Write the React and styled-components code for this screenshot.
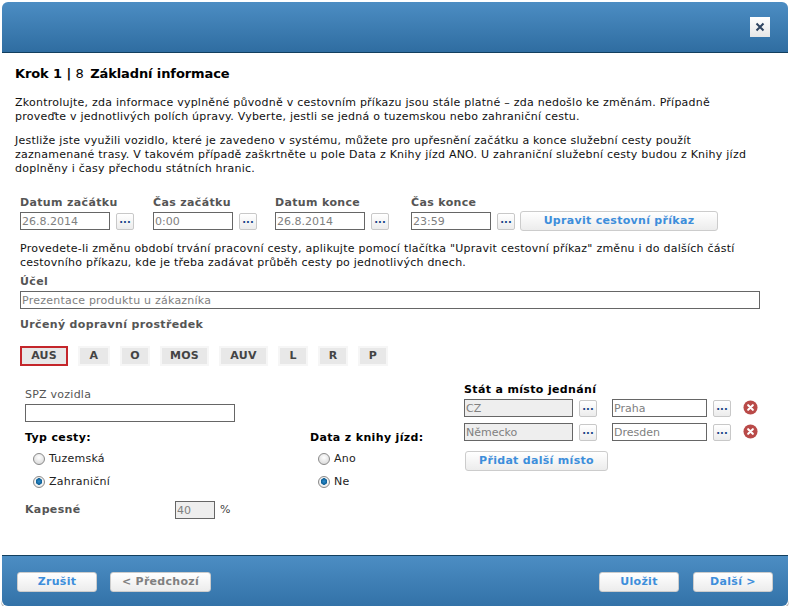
import React from "react";
import styled, { createGlobalStyle } from "styled-components";

const GlobalStyle = createGlobalStyle`
    html, body {
        margin: 0;
        padding: 0;
        background: #fff;
    }
    * {
        box-sizing: border-box;
    }
`;

const Dialog = styled.div`
    width: 786px;
    height: 604px;
    margin: 2px 0 0 2px;
    display: flex;
    flex-direction: column;
    border-radius: 6px;
    overflow: hidden;
    box-shadow: 0 0 0 1px #fff, 0 2px 0 1px #bbb;
    font-family: "DejaVu Sans", Verdana, sans-serif;
    font-size: 11px;
    line-height: 14px;
    letter-spacing: 0.24px;
    color: #111;
`;

const Header = styled.div`
    height: 51px;
    flex: none;
    display: flex;
    align-items: center;
    justify-content: flex-end;
    padding: 0 18px 0 0;
    background: linear-gradient(#4c8dc3, #2f6da1);
    border-bottom: 1px solid #123f5e;
`;

const CloseButton = styled.button`
    width: 20px;
    height: 20px;
    padding: 0;
    border: none;
    display: flex;
    align-items: center;
    justify-content: center;
    background: linear-gradient(#fff, #e6e6e6);
    color: #2f4460;
`;

const Body = styled.div`
    flex: 1;
    background: #fff;
    padding: 13px 0 0 13px;
`;

const Title = styled.h2`
    margin: 0 0 14px;
    font-size: 13px;
    line-height: 16px;
    font-weight: bold;
    letter-spacing: -0.1px;
    color: #000;
`;

const TitleStep = styled.span`
    font-weight: normal;
    margin: 0 2px 0 0;
`;

const Para = styled.p`
    margin: 0 0 10px;
    width: 738px;
`;

const DateRow = styled.div`
    display: flex;
    align-items: flex-end;
    margin: 20px 0 0 5px;
`;

const DateField = styled.div`
    display: flex;
    flex-direction: column;
    width: ${(p) => p.$w}px;
`;

const Label = styled.label`
    display: block;
    margin-bottom: 2px;
    font-size: 11px;
    line-height: 14px;
    font-weight: bold;
    letter-spacing: 0.35px;
    color: #555;
`;

const InputRow = styled.div`
    display: flex;
    align-items: center;
    gap: 6px;
`;

const Input = styled.input`
    display: block;
    width: ${(p) => p.$w}px;
    height: 18px;
    padding: 0 1px;
    border: 1px solid #666;
    border-radius: 0;
    background: ${(p) => (p.$gray ? "#eee" : "#fff")};
    color: #808080;
    font: 11px "DejaVu Sans", Verdana, sans-serif;
    letter-spacing: ${(p) => (p.$spaced ? "0.23px" : "0")};
    outline: none;
`;

const PlaceInput = styled(Input)`
    margin-left: 9px;
`;

const DotsButton = styled.button`
    width: 18px;
    height: 17px;
    flex: none;
    padding: 0 0 3px;
    border: 1px solid #c8c8c8;
    border-radius: 2px;
    background: linear-gradient(#fff, #ececec);
    color: #1c4587;
    font: bold 10px/10px "DejaVu Sans", Verdana, sans-serif;
`;

const ActionButton = styled.button`
    width: ${(p) => p.$w}px;
    height: 20px;
    flex: none;
    padding: 0;
    border: 1px solid #ccc;
    border-radius: 3px;
    background: linear-gradient(#fff, #ececec);
    color: ${(p) => (p.$disabled ? "#808080" : "#3d8edb")};
    font: bold 11px/16px "DejaVu Sans", Verdana, sans-serif;
    letter-spacing: 0.3px;
`;

const EditButton = styled(ActionButton)`
    margin: 0 0 -1px 5px;
`;

const Note = styled.p`
    margin: 12px 0 0 5px;
    width: 745px;
`;

const FieldBlock = styled.div`
    margin: ${(p) => p.$top}px 0 0 5px;
`;

const Chips = styled.div`
    display: flex;
    gap: 10px;
    margin: 14px 0 0 5px;
`;

const Chip = styled.div`
    width: ${(p) => p.$w}px;
    height: 20px;
    display: flex;
    align-items: center;
    justify-content: center;
    border: 2px solid ${(p) => (p.$active ? "#c4262b" : "#f6f6f6")};
    background: #e8e8e8;
    color: #444;
    font-size: 11px;
    font-weight: bold;
`;

const Columns = styled.div`
    display: grid;
    grid-template-columns: 285px 154px 1fr;
    margin: 15px 0 0 10px;
`;

const SmallLabel = styled.div`
    line-height: 14px;
    color: #555;
    margin: 7px 0 2px;
`;

const GroupTitle = styled.div`
    line-height: 14px;
    font-weight: bold;
    letter-spacing: 0.35px;
    color: #000;
    margin: ${(p) => p.$top}px 0 0;
`;

const RadioRow = styled.label`
    display: flex;
    align-items: center;
    gap: 4px;
    height: 14px;
    margin: ${(p) => (p.$first ? "7px" : "9px")} 0 0 8px;
    color: #222;
`;

const RadioDot = styled.span`
    width: 12px;
    height: 12px;
    flex: none;
    border-radius: 50%;
    border: 1px solid #8a8a8a;
    background: ${(p) =>
        p.$checked
            ? "radial-gradient(circle at 50% 45%, #2f8fd0 0, #0d5e94 3px, #f4f4f4 3.5px, #e0e0e0 100%)"
            : "radial-gradient(circle at 50% 35%, #fff, #d2d2d2)"};
`;

const KapesneRow = styled.div`
    display: flex;
    align-items: center;
    margin: 12px 0 0;
`;

const KapesneLabel = styled.span`
    width: 150px;
    font-weight: bold;
    letter-spacing: 0.35px;
    color: #555;
`;

const Percent = styled.span`
    margin-left: 5px;
    color: #444;
`;

const PlaceHead = styled.div`
    margin: 2px 0 2px;
    line-height: 14px;
    font-weight: bold;
    letter-spacing: 0.35px;
    color: #000;
`;

const PlaceRow = styled.div`
    display: flex;
    align-items: center;
    gap: 6px;
    margin-bottom: 6px;
`;

const RemoveIcon = styled.svg`
    width: 15px;
    height: 15px;
    flex: none;
    margin: -2px 0 0 6px;
`;

const AddButton = styled(ActionButton)`
    margin: 4px 0 0 1px;
`;

const Footer = styled.div`
    height: 51px;
    flex: none;
    display: flex;
    align-items: flex-start;
    padding: 16px 15px 0;
    background: linear-gradient(#4c8dc3, #3372a8);
    border-top: 1px solid #123f5e;
`;

const FooterGroup = styled.div`
    display: flex;
    gap: ${(p) => p.$gap}px;
    margin-left: ${(p) => (p.$right ? "auto" : "0")};
`;

const Remove = () => (
    <RemoveIcon viewBox="0 0 16 16">
        <circle cx="8" cy="8" r="7.5" fill="#b94a48" />
        <path d="M5.5 5.5l5 5M10.5 5.5l-5 5" stroke="#fff" strokeWidth="2.2" strokeLinecap="round" />
    </RemoveIcon>
);

const Radio = ({ checked, first, children }) => (
    <RadioRow $first={first}>
        <RadioDot $checked={checked} />
        {children}
    </RadioRow>
);

const chips = [
    ["AUS", 48, true],
    ["A", 32],
    ["O", 30],
    ["MOS", 49],
    ["AUV", 49],
    ["L", 30],
    ["R", 30],
    ["P", 30],
];

const App = () => {
    return (
        <>
            <GlobalStyle />
            <Dialog>
                <Header>
                    <CloseButton aria-label="Zavřít">
                        <svg width="10" height="10" viewBox="0 0 10 10">
                            <path d="M1.5 1.5l7 7M8.5 1.5l-7 7" stroke="currentColor" strokeWidth="2" />
                        </svg>
                    </CloseButton>
                </Header>
                <Body>
                    <Title>Krok 1 | <TitleStep>8</TitleStep> Základní informace</Title>
                    <Para>
                        Zkontrolujte, zda informace vyplněné původně v cestovním příkazu jsou stále platné – zda nedošlo ke změnám. Případně proveďte v jednotlivých polích úpravy. Vyberte, jestli se jedná o tuzemskou nebo zahraniční cestu.
                    </Para>
                    <Para>
                        Jestliže jste využili vozidlo, které je zavedeno v systému, můžete pro upřesnění začátku a konce služební cesty použít zaznamenané trasy. V takovém případě zaškrtněte u pole Data z Knihy jízd ANO. U zahraniční služební cesty budou z Knihy jízd doplněny i časy přechodu státních hranic.
                    </Para>
                    <DateRow>
                        <DateField $w={133}>
                            <Label>Datum začátku</Label>
                            <InputRow>
                                <Input $w={90} defaultValue="26.8.2014" readOnly />
                                <DotsButton>...</DotsButton>
                            </InputRow>
                        </DateField>
                        <DateField $w={122}>
                            <Label>Čas začátku</Label>
                            <InputRow>
                                <Input $w={80} defaultValue="0:00" readOnly />
                                <DotsButton>...</DotsButton>
                            </InputRow>
                        </DateField>
                        <DateField $w={136}>
                            <Label>Datum konce</Label>
                            <InputRow>
                                <Input $w={90} defaultValue="26.8.2014" readOnly />
                                <DotsButton>...</DotsButton>
                            </InputRow>
                        </DateField>
                        <DateField $w={104}>
                            <Label>Čas konce</Label>
                            <InputRow>
                                <Input $w={80} defaultValue="23:59" readOnly />
                                <DotsButton>...</DotsButton>
                            </InputRow>
                        </DateField>
                        <EditButton $w={198}>Upravit cestovní příkaz</EditButton>
                    </DateRow>
                    <Note>
                        Provedete-li změnu období trvání pracovní cesty, aplikujte pomocí tlačítka "Upravit cestovní příkaz" změnu i do dalších částí cestovního příkazu, kde je třeba zadávat průběh cesty po jednotlivých dnech.
                    </Note>
                    <FieldBlock $top={5}>
                        <Label>Účel</Label>
                        <Input $w={740} $spaced defaultValue="Prezentace produktu u zákazníka" readOnly />
                    </FieldBlock>
                    <FieldBlock $top={9}>
                        <Label>Určený dopravní prostředek</Label>
                    </FieldBlock>
                    <Chips>
                        {chips.map(([name, w, active]) => (
                            <Chip key={name} $w={w} $active={active}>{name}</Chip>
                        ))}
                    </Chips>
                    <Columns>
                        <div>
                            <SmallLabel>SPZ vozidla</SmallLabel>
                            <Input $w={210} />
                            <GroupTitle $top={9}>Typ cesty:</GroupTitle>
                            <Radio first>Tuzemská</Radio>
                            <Radio checked>Zahraniční</Radio>
                            <KapesneRow>
                                <KapesneLabel>Kapesné</KapesneLabel>
                                <Input $w={40} $gray defaultValue="40" readOnly />
                                <Percent>%</Percent>
                            </KapesneRow>
                        </div>
                        <div>
                            <GroupTitle $top={50}>Data z knihy jízd:</GroupTitle>
                            <Radio first>Ano</Radio>
                            <Radio checked>Ne</Radio>
                        </div>
                        <div>
                            <PlaceHead>Stát a místo jednání</PlaceHead>
                            <PlaceRow>
                                <Input $w={109} $gray defaultValue="CZ" readOnly />
                                <DotsButton>...</DotsButton>
                                <PlaceInput $w={95} defaultValue="Praha" readOnly />
                                <DotsButton>...</DotsButton>
                                <Remove />
                            </PlaceRow>
                            <PlaceRow>
                                <Input $w={109} $gray defaultValue="Německo" readOnly />
                                <DotsButton>...</DotsButton>
                                <PlaceInput $w={95} defaultValue="Dresden" readOnly />
                                <DotsButton>...</DotsButton>
                                <Remove />
                            </PlaceRow>
                            <AddButton $w={143}>Přidat další místo</AddButton>
                        </div>
                    </Columns>
                </Body>
                <Footer>
                    <FooterGroup $gap={13}>
                        <ActionButton $w={80}>Zrušit</ActionButton>
                        <ActionButton $w={101} $disabled>&lt; Předchozí</ActionButton>
                    </FooterGroup>
                    <FooterGroup $gap={14} $right>
                        <ActionButton $w={80}>Uložit</ActionButton>
                        <ActionButton $w={80}>Další &gt;</ActionButton>
                    </FooterGroup>
                </Footer>
            </Dialog>
        </>
    );
};

export default App;
